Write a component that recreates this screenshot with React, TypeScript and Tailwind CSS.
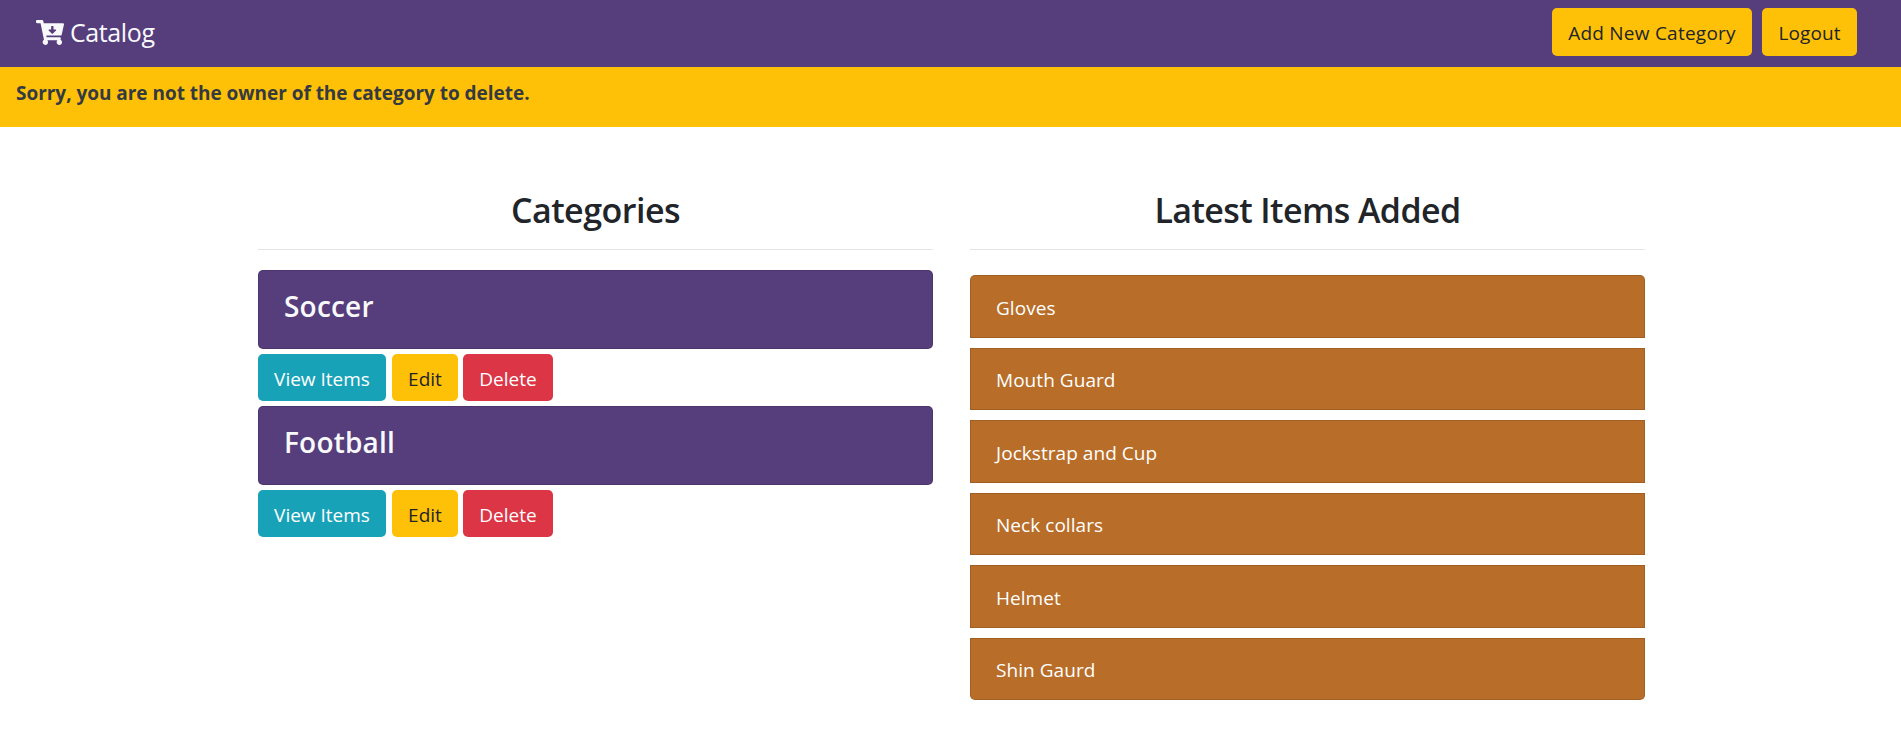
import { FaCartArrowDown } from "react-icons/fa";

const categories = ["Soccer", "Football"];
const items = ["Gloves", "Mouth Guard", "Jockstrap and Cup", "Neck collars", "Helmet", "Shin Gaurd"];

const button = "flex h-[47px] items-center justify-center rounded-[5px] pt-[3px]";
const navButton = "flex h-12 items-center justify-center rounded-[5px] bg-[#ffc107] pt-[3px]";
const heading = "flex h-[42px] items-center justify-center text-[34px] font-semibold";

function Category({ name }: { name: string }) {
  return (
    <div>
      <div className="h-[79px] rounded-[5px] border border-black/12 bg-[#563d7c] px-[25px] pt-[14px] text-[28px] font-semibold tracking-[0.2px] text-[#f8f9fa]">
        {name}
      </div>
      <div className="flex py-[5px]">
        <button className={`${button} w-32 bg-[#17a2b8] text-white`}>View Items</button>
        <button className={`${button} ml-[6px] w-[66px] bg-[#ffc107]`}>Edit</button>
        <button className={`${button} ml-[5px] w-[90px] bg-[#dc3545] text-white`}>Delete</button>
      </div>
    </div>
  );
}

export default function App() {
  return (
    <div className="h-[746px] bg-white font-['Open_Sans',sans-serif] text-[19px] text-[#212529]">
      <nav className="flex h-[67px] items-start justify-between bg-[#563d7c] pt-2 pr-11 pl-9">
        <a className="flex h-12 items-center gap-[6px] pt-px text-[#f8f9fa]">
          <FaCartArrowDown className="h-[25px] w-[28px]" />
          <span className="pt-px text-[25px] tracking-[-0.4px]">Catalog</span>
        </a>
        <div className="flex gap-[10px]">
          <button className={`${navButton} w-[200px] tracking-[0.24px]`}>Add New Category</button>
          <button className={`${navButton} w-[95px] tracking-[0.1px]`}>Logout</button>
        </div>
      </nav>
      <div className="h-[60px] bg-[#ffc107] px-4 pt-3 font-bold tracking-[-0.03px] text-[#343a40]">
        Sorry, you are not the owner of the category to delete.
      </div>
      <div className="flex justify-center pl-[2px]">
        <main className="grid w-[1387px] grid-cols-2 gap-x-[37px] pt-[62px]">
          <section>
            <h3 className={`${heading} tracking-[-0.5px]`}>Categories</h3>
            <hr className="mt-[18px] mb-5 border-t border-[#e5e5e5]" />
            {categories.map((name) => (
              <Category key={name} name={name} />
            ))}
          </section>
          <section>
            <h3 className={`${heading} tracking-[-0.6px]`}>Latest Items Added</h3>
            <hr className="mt-[18px] mb-[25px] border-t border-[#e5e5e5]" />
            <ul className="flex flex-col gap-[10px]">
              {items.map((item) => (
                <li
                  key={item}
                  className="flex h-[62.5px] items-center border border-black/12 bg-[#b86d29] px-[25px] pt-[3px] tracking-[0.05px] text-white first:rounded-t-[5px] last:rounded-b-[5px]"
                >
                  {item}
                </li>
              ))}
            </ul>
          </section>
        </main>
      </div>
    </div>
  );
}
